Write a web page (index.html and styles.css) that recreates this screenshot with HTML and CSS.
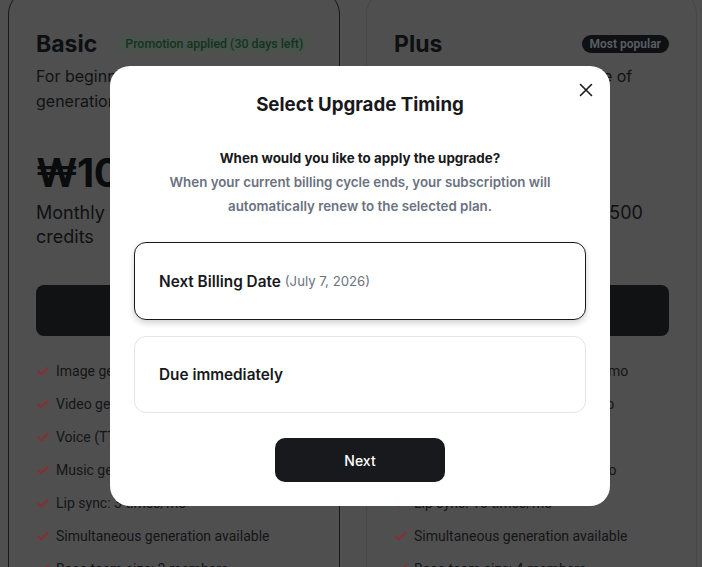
FILE: index.html
```html
<!DOCTYPE html>
<html lang="en">
<head>
<meta charset="utf-8">
<title>Select Upgrade Timing</title>
<link rel="stylesheet" href="styles.css">
</head>
<body>
<main class="plans">
  <section class="card card-basic">
    <div class="card-head">
      <h2 class="plan-name">Basic</h2>
      <span class="badge badge-promo">Promotion applied (30 days left)</span>
    </div>
    <p class="plan-desc">For beginners exploring AI content generation</p>
    <div class="price"><span class="amount">₩10,000</span><span class="per">/mo</span></div>
    <p class="credits">Monthly 1,000 + bonus 500 credits</p>
    <button class="plan-btn" type="button">Current plan</button>
    <ul class="features">
      <li><svg class="check" viewBox="0 0 14 14"><path d="M2 7.2l3.2 3.2L12 3.6"/></svg>Image generation: 300 times/mo</li>
      <li><svg class="check" viewBox="0 0 14 14"><path d="M2 7.2l3.2 3.2L12 3.6"/></svg>Video generation: 20 times/mo</li>
      <li><svg class="check" viewBox="0 0 14 14"><path d="M2 7.2l3.2 3.2L12 3.6"/></svg>Voice (TTS): 100 times/mo</li>
      <li><svg class="check" viewBox="0 0 14 14"><path d="M2 7.2l3.2 3.2L12 3.6"/></svg>Music generation: 10 times/mo</li>
      <li><svg class="check" viewBox="0 0 14 14"><path d="M2 7.2l3.2 3.2L12 3.6"/></svg>Lip sync: 3 times/mo</li>
      <li><svg class="check" viewBox="0 0 14 14"><path d="M2 7.2l3.2 3.2L12 3.6"/></svg>Simultaneous generation available</li>
      <li><svg class="check" viewBox="0 0 14 14"><path d="M2 7.2l3.2 3.2L12 3.6"/></svg>Base team size: 2 members</li>
    </ul>
  </section>
  <section class="card card-plus">
    <div class="card-head card-head-split">
      <h2 class="plan-name">Plus</h2>
      <span class="badge badge-popular">Most popular</span>
    </div>
    <p class="plan-desc">For pros using a broad range of generation tools</p>
    <div class="price"><span class="amount">₩29,000</span><span class="per">/mo</span></div>
    <p class="credits">Monthly 3,000 + bonus 1,500 credits</p>
    <button class="plan-btn" type="button">Upgrade</button>
    <ul class="features">
      <li><svg class="check" viewBox="0 0 14 14"><path d="M2 7.2l3.2 3.2L12 3.6"/></svg>Image generation: 1,000 times/mo</li>
      <li><svg class="check" viewBox="0 0 14 14"><path d="M2 7.2l3.2 3.2L12 3.6"/></svg>Video generation: 100 times/mo</li>
      <li><svg class="check" viewBox="0 0 14 14"><path d="M2 7.2l3.2 3.2L12 3.6"/></svg>Voice (TTS): Unlimited</li>
      <li><svg class="check" viewBox="0 0 14 14"><path d="M2 7.2l3.2 3.2L12 3.6"/></svg>Music generation: 100 times/mo</li>
      <li><svg class="check" viewBox="0 0 14 14"><path d="M2 7.2l3.2 3.2L12 3.6"/></svg>Lip sync: 10 times/mo</li>
      <li><svg class="check" viewBox="0 0 14 14"><path d="M2 7.2l3.2 3.2L12 3.6"/></svg>Simultaneous generation available</li>
      <li><svg class="check" viewBox="0 0 14 14"><path d="M2 7.2l3.2 3.2L12 3.6"/></svg>Base team size: 4 members</li>
    </ul>
  </section>
</main>

<div class="modal" role="dialog" aria-labelledby="modal-title">
  <button class="close" type="button" aria-label="Close">
    <svg viewBox="0 0 14 14"><path d="M1.5 1.5l11 11M12.5 1.5l-11 11"/></svg>
  </button>
  <h1 class="modal-title" id="modal-title">Select Upgrade Timing</h1>
  <p class="question">When would you like to apply the upgrade?</p>
  <p class="explain">When your current billing cycle ends, your subscription will automatically renew to the selected plan.</p>
  <div class="options">
    <button class="option option-selected" type="button"><span class="opt-label">Next Billing Date</span> <span class="opt-date">(July 7, 2026)</span></button>
    <button class="option" type="button"><span class="opt-label">Due immediately</span></button>
  </div>
  <div class="actions">
    <button class="next" type="button">Next</button>
  </div>
</div>
</body>
</html>
```

FILE: styles.css
```css
* { box-sizing: border-box; }

html, body { height: 100%; }

body {
  margin: 0;
  background: #4f4f4f;
  font-family: Inter, "Noto Sans", sans-serif;
  color: #0d0f12;
  overflow: hidden;
}

/* ---------- dimmed pricing page ---------- */
.plans {
  display: grid;
  grid-template-columns: 332px 331px;
  column-gap: 26px;
  padding-left: 8px;
  margin-top: -10px;
}

.card {
  border: 1px solid #474747;
  border-radius: 24px;
  padding: 37px 27px 0;
  height: 700px;
}

.card-basic { border-color: #17181a; }

.card-head {
  display: flex;
  align-items: center;
  gap: 20px;
  height: 32px;
}

.card-head-split { justify-content: space-between; }

.plan-name {
  margin: 0;
  font-size: 23px;
  font-weight: 700;
  line-height: 32px;
  color: #0d0f12;
}

.badge {
  height: 18px;
  line-height: 18px;
  padding: 0 8px;
  border-radius: 9px;
  font-family: Roboto, Inter, sans-serif;
  font-size: 12px;
  font-weight: 500;
  white-space: nowrap;
}

.badge-promo { background: #4a524c; color: #133420; font-size: 12.4px; }
.badge-popular { background: #0e1013; color: #585c61; font-weight: 700; }

.plan-desc {
  margin: 4px 0 0;
  font-size: 16px;
  line-height: 25px;
  color: #111214;
}

.price {
  margin-top: 35px;
  height: 48px;
  display: flex;
  align-items: baseline;
  gap: 4px;
}

.amount {
  font-size: 40px;
  font-weight: 700;
  line-height: 48px;
  letter-spacing: -0.5px;
  color: #0a0b0d;
}

.per { font-size: 14px; color: #2e3033; }

.credits {
  margin: 4px 0 0;
  font-size: 18px;
  line-height: 24px;
  color: #0f1012;
}

.plan-btn {
  display: block;
  width: 100%;
  height: 51px;
  margin-top: 36px;
  border: 0;
  border-radius: 8px;
  background: #111214;
  color: #4d4d4d;
  font: 600 15px Inter, sans-serif;
}

.features {
  list-style: none;
  margin: 18px 0 0;
  padding: 0;
}

.features li {
  display: flex;
  align-items: center;
  gap: 6px;
  height: 33px;
  font-family: Roboto, Inter, sans-serif;
  font-size: 14px;
  color: #141517;
  white-space: nowrap;
}

.check {
  width: 14px;
  height: 14px;
  flex: none;
  fill: none;
  stroke: #8c2d33;
  stroke-width: 2;
  stroke-linecap: round;
  stroke-linejoin: round;
}

/* ---------- modal ---------- */
.modal {
  position: fixed;
  left: 110px;
  top: 66px;
  width: 500px;
  height: 440px;
  background: #fff;
  border-radius: 20px;
  padding: 25px 24px 24px;
  display: flex;
  flex-direction: column;
}

.close {
  position: absolute;
  top: 17px;
  right: 17px;
  width: 14px;
  height: 14px;
  padding: 0;
  border: 0;
  background: none;
}

.close svg {
  display: block;
  width: 14px;
  height: 14px;
  stroke: #18191c;
  stroke-width: 1.6;
  stroke-linecap: round;
  fill: none;
}

.modal-title {
  margin: 0;
  text-align: center;
  font-size: 18.7px;
  font-weight: 700;
  line-height: 28px;
  color: #18191c;
}

.question {
  margin: 27px 0 0;
  text-align: center;
  font-size: 13.4px;
  font-weight: 700;
  line-height: 24px;
  color: #18191c;
}

.explain {
  margin: 0 20px;
  text-align: center;
  font-size: 13.33px;
  font-weight: 600;
  line-height: 24px;
  color: #6b7280;
}

.options {
  margin-top: 24px;
  display: flex;
  flex-direction: column;
  gap: 16px;
}

.option {
  display: flex;
  align-items: center;
  gap: 4px;
  height: 78px;
  padding: 0 24px;
  border: 1px solid #e4e5e8;
  border-radius: 12px;
  background: #fff;
  text-align: left;
  font-family: Inter, sans-serif;
}

.option:last-child { height: 77px; }

.option-selected {
  border-color: #18191c;
  box-shadow: 0 3px 6px rgba(0, 0, 0, 0.18);
}

.opt-label {
  font-size: 15.33px;
  font-weight: 600;
  color: #18191c;
}

.opt-date {
  font-size: 13.2px;
  font-weight: 400;
  color: #6b7280;
}

.actions {
  margin-top: 25px;
  display: flex;
  justify-content: center;
}

.next {
  width: 170px;
  height: 44px;
  border: 0;
  border-radius: 10px;
  background: #18191c;
  color: #fff;
  font: 500 14px Inter, sans-serif;
}
```
